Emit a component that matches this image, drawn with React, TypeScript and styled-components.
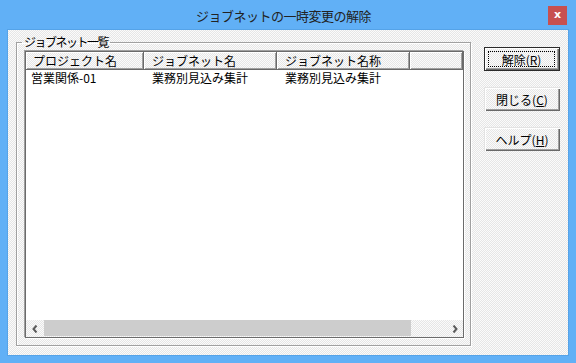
import React from 'react';
import styled, { createGlobalStyle } from 'styled-components';

const GlobalStyle = createGlobalStyle`
  html, body { margin: 0; padding: 0; }
  body {
    font-family: "Noto Sans CJK JP", "Noto Sans", sans-serif;
    font-size: 12px;
    color: #000;
  }
`;

const dither = `
  background-color: #f0f0f0;
  background-image: conic-gradient(#e6e6e6 0 25%, #fbfbfb 0 50%, #e6e6e6 0 75%, #fbfbfb 0);
  background-size: 2px 2px;
`;

const Window = styled.div`
  width: 576px;
  height: 363px;
  box-sizing: border-box;
  background: #61b0f6;
  display: flex;
  flex-direction: column;
  padding: 0 8px 8px;
`;

const TitleBar = styled.div`
  height: 30px;
  flex: none;
  display: grid;
  grid-template-columns: 1fr auto 1fr;
  align-items: start;
  margin: 0 -8px;
  padding-right: 9px;
`;

const Title = styled.div`
  grid-column: 2;
  line-height: 28px;
  padding-top: 2px;
  font-size: 13px;
  letter-spacing: -0.5px;
  color: #222;
`;

const CloseButton = styled.div`
  grid-column: 3;
  justify-self: end;
  margin-top: 6px;
  width: 19px;
  height: 19px;
  background: #c75050;
  color: #fff;
  font: bold 11px/17px "DejaVu Sans", sans-serif;
  text-align: center;
`;

const Client = styled.div`
  flex: 1;
  ${dither}
  box-shadow: 0 0 0 1px #55a3e8;
  display: flex;
  align-items: flex-start;
  padding: 5px 8px 9px;
  box-sizing: border-box;
  min-height: 0;
`;

const Group = styled.fieldset`
  margin: 0;
  width: 455px;
  box-sizing: border-box;
  border: 1px solid #a0a0a0;
  box-shadow: inset 1px 1px 0 #fff, 1px 1px 0 #fff;
  padding: 2px 6px 7px 8px;
  min-width: 0;
`;

const Legend = styled.legend`
  margin-left: -3px;
  padding: 0 2px;
  line-height: 14px;
  letter-spacing: -1.5px;
`;

const List = styled.div`
  height: 287px;
  box-sizing: border-box;
  background: #fff;
  border: 1px solid #6b6b6b;
  box-shadow: -1px -1px 0 #a0a0a0, 1px 1px 0 #fff;
  display: flex;
  flex-direction: column;
`;

const Header = styled.div`
  display: flex;
  height: 18px;
  flex: none;
`;

const HeadCell = styled.div<{ w?: number }>`
  ${dither}
  ${p => (p.w ? `width: ${p.w}px; flex: none;` : 'flex: 1;')}
  box-sizing: border-box;
  border-right: 1px solid #696969;
  border-bottom: 1px solid #696969;
  box-shadow: inset 1px 1px 0 #fff, inset -1px -1px 0 #a0a0a0;
  padding-left: 7px;
  line-height: 17px;
  white-space: nowrap;
  overflow: hidden;
`;

const Body = styled.div`
  flex: 1;
`;

const Row = styled.div`
  display: flex;
  height: 16px;
  line-height: 16px;
`;

const Cell = styled.div<{ w: number; pad: number }>`
  width: ${p => p.w}px;
  flex: none;
  box-sizing: border-box;
  padding-left: ${p => p.pad}px;
  white-space: nowrap;
`;

const ScrollBar = styled.div`
  ${dither}
  height: 17px;
  flex: none;
  display: flex;
`;

const Arrow = styled.div`
  width: 17px;
  flex: none;
  display: flex;
  align-items: center;
  justify-content: center;
`;

const Thumb = styled.div`
  width: 367px;
  margin: 0 0 1px 1px;
  background: #cdcdcd;
`;

const Track = styled.div`
  flex: 1;
`;

const Buttons = styled.div`
  margin-left: auto;
  margin-top: 12px;
  width: 76px;
  display: flex;
  flex-direction: column;
  gap: 16px;
`;

const Button = styled.div<{ primary?: boolean }>`
  ${dither}
  height: 24px;
  box-sizing: border-box;
  display: flex;
  align-items: center;
  justify-content: center;
  ${p =>
    p.primary
      ? `border: 1px solid #2a2a2a;
         box-shadow: inset 1px 1px 0 #fff, inset -1px -1px 0 #696969, inset -2px -2px 0 #a0a0a0;
         padding: 2px;`
      : `box-shadow: inset 1px 1px 0 #e3e3e3, inset 2px 2px 0 #fff, inset -1px -1px 0 #696969, inset -2px -2px 0 #a0a0a0;`}
`;

const Focus = styled.span`
  flex: 1;
  align-self: stretch;
  margin: 1px 2px 1px 1px;
  border: 1px dotted #000;
  display: flex;
  align-items: center;
  justify-content: center;
`;

const Chevron = ({ dir }: { dir: 'left' | 'right' }) => (
  <svg width="6" height="8" viewBox="0 0 6 8">
    <polyline
      points={dir === 'left' ? '4.5,0.5 1.5,4 4.5,7.5' : '1.5,0.5 4.5,4 1.5,7.5'}
      fill="none"
      stroke="#5a5a5a"
      strokeWidth="2"
    />
  </svg>
);

const rows = [['営業関係-01', '業務別見込み集計', '業務別見込み集計']];

export default function App() {
  return (
    <>
      <GlobalStyle />
      <Window>
        <TitleBar>
          <Title>ジョブネットの一時変更の解除</Title>
          <CloseButton>x</CloseButton>
        </TitleBar>
        <Client>
          <Group>
            <Legend>ジョブネット一覧</Legend>
            <List>
              <Header>
                <HeadCell w={118}>プロジェクト名</HeadCell>
                <HeadCell w={133} style={{ paddingLeft: 8 }}>ジョブネット名</HeadCell>
                <HeadCell w={133} style={{ paddingLeft: 8 }}>ジョブネット名称</HeadCell>
                <HeadCell />
              </Header>
              <Body>
                {rows.map((r, i) => (
                  <Row key={i}>
                    <Cell w={118} pad={5}>{r[0]}</Cell>
                    <Cell w={133} pad={8}>{r[1]}</Cell>
                    <Cell w={133} pad={8}>{r[2]}</Cell>
                  </Row>
                ))}
              </Body>
              <ScrollBar>
                <Arrow><Chevron dir="left" /></Arrow>
                <Thumb />
                <Track />
                <Arrow><Chevron dir="right" /></Arrow>
              </ScrollBar>
            </List>
          </Group>
          <Buttons>
            <Button primary><Focus>解除(<u>R</u>)</Focus></Button>
            <Button>閉じる(<u>C</u>)</Button>
            <Button>ヘルプ(<u>H</u>)</Button>
          </Buttons>
        </Client>
      </Window>
    </>
  );
}
